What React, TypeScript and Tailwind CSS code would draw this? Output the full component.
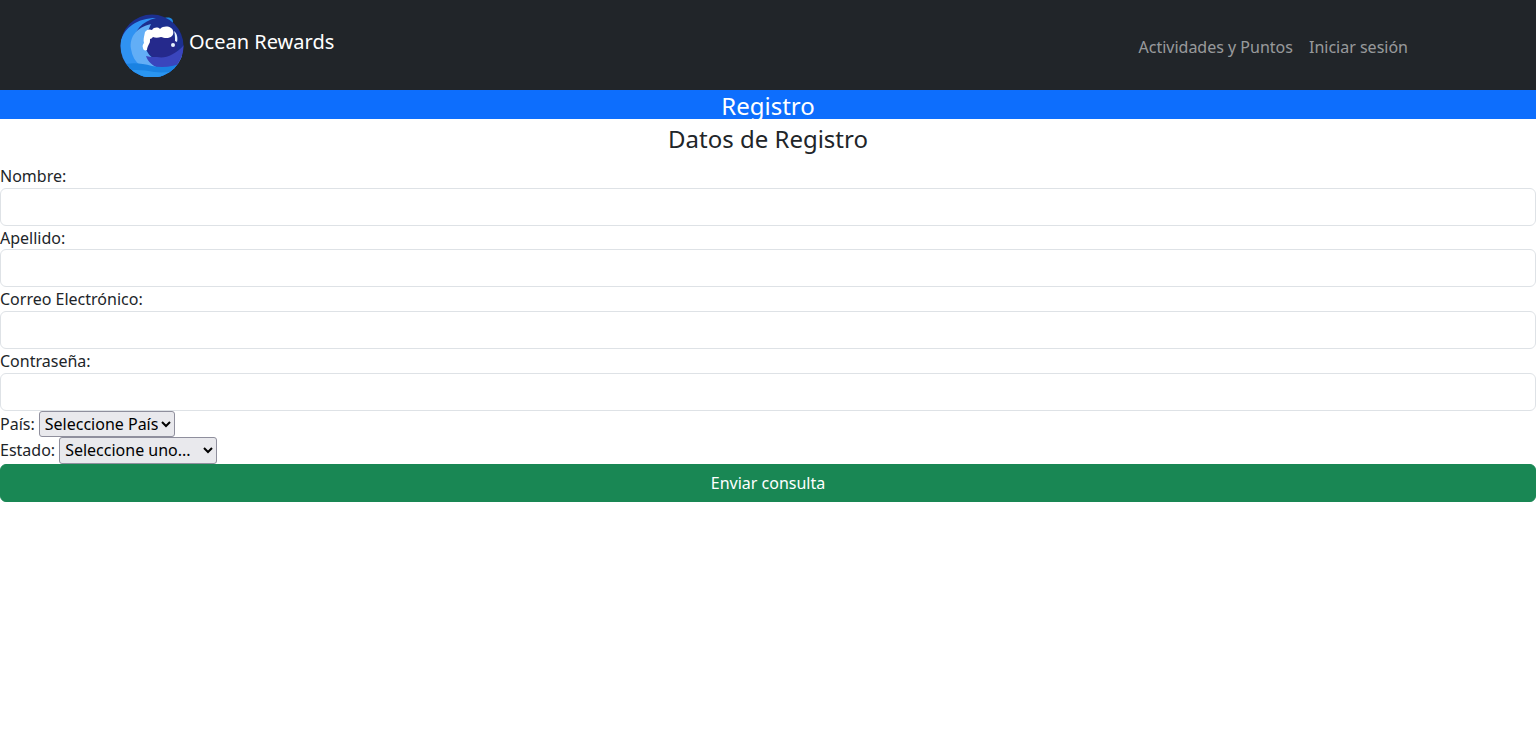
import React from "react";

const font = { fontFamily: "" };

function Logo() {
  return (
    <svg viewBox="0 0 64 64" className="w-16 h-16 shrink-0">
      <defs>
        <clipPath id="disc">
          <circle cx="32" cy="33" r="31.5" />
        </clipPath>
      </defs>
      <path d="M41 9c1-4 7-6 11-3 1 1 1 3 1 4-4-2-8-2-12-1z" fill="#1e88e5" />
      <g clipPath="url(#disc)">
        <rect width="64" height="64" fill="#1c2f8f" />
        <path d="M0 30C4 14 18 5 36 5 20 9 12 20 14 34c2 14 14 22 28 21l22-6v16H0z" fill="#2f92f2" />
        <path d="M11 36c-2-12 6-22 20-25l-6 14c-2 10 4 22 18 24 8 1 16-3 21-9v8L40 60C24 58 13 50 11 36z" fill="#62aef6" />
        <path d="M27 28c0-4 6-6 14-5l12 1c4 3 5 10 3 16-4 4-10 8-17 7-8-2-13-10-12-19z" fill="#25298c" />
        <path d="M37 44c8 2 18-2 27-12v16c-7 6-16 9-25 7-6-2-11-6-13-12 3 1 7 1 11 1z" fill="#3a45bd" />
        <path d="M0 53c10-4 20-3 32 0 10 2 22 1 32-4v15H0z" fill="#1a82e2" />
        <path d="M0 59c12-3 24-2 34 0 10 1 20 0 30-3v8H0z" fill="#2a95f0" />
      </g>
      <path
        d="M25 19c2-3 5-3 7-2 2-3 6-3 8-1 3-3 8-3 11-1 3 2 3 6 1 8-3 3-8 2-11 1-3 1-6 1-8 0-1 1-2 2-3 2 0 2 0 4-1 5-1 2-2 4-2 6-2 1-4 0-4-2-1-2 0-4 1-5-1-3 0-6 1-11z"
        fill="#ffffff"
      />
      <path d="M54 18c3 2 4 7 3 11l-2-1c0-3 0-7-1-10z" fill="#e6f2ff" />
      <circle cx="53" cy="32" r="2" fill="#e6f2ff" />
    </svg>
  );
}

function Field({ label, id }: { label: string; id: string }) {
  return (
    <div>
      <label htmlFor={id} className="block h-[23.67px] leading-[24px]">
        {label}
      </label>
      <input
        id={id}
        type="text"
        className="block w-full h-[38px] bg-white border border-[#dee2e6] rounded-md px-3 py-1.5"
      />
    </div>
  );
}

export default function App() {
  return (
    <div className="min-h-screen bg-white text-[#212529] text-base font-['Noto_Sans',sans-serif]">
      <nav className="h-[90px] bg-[#212529] flex items-center justify-between pl-[120px] pr-[120px]">
        <a href="#" className="flex items-center gap-[5px] text-white text-xl pb-[1px]">
          <Logo />
          <span className="relative -top-[3px]">Ocean Rewards</span>
        </a>
        <ul className="flex gap-4 pr-2 pt-[4px] text-[#ffffff8c]">
          <li>
            <a href="#">Actividades y Puntos</a>
          </li>
          <li>
            <a href="#">Iniciar sesión</a>
          </li>
        </ul>
      </nav>

      <div className="h-[29px] bg-[#0d6efd] text-white text-2xl leading-[32px] text-center">Registro</div>

      <main>
        <h2 className="h-[45px] text-2xl leading-[40px] text-center font-normal">Datos de Registro</h2>

        <form>
          <Field label="Nombre:" id="nombre" />
          <Field label="Apellido:" id="apellido" />
          <Field label="Correo Electrónico:" id="correo" />
          <Field label="Contraseña:" id="contrasena" />

          <div className="flex items-center h-[26px]">
            <label htmlFor="pais" className="mr-1">
              País:
            </label>
            <select
              id="pais"
              className="h-[26px] w-[136px] text-black border border-[#8f8f9d] bg-[#e9e9ed] rounded-[3px] pl-[1px]"
              style={{ appearance: "auto" }}
            >
              <option>Seleccione País</option>
            </select>
          </div>
          <div className="flex items-center h-[27px]">
            <label htmlFor="estado" className="mr-1">
              Estado:
            </label>
            <select
              id="estado"
              className="h-[27px] w-[158px] text-black border border-[#8f8f9d] bg-[#e9e9ed] rounded-[3px] pl-[1px]"
              style={{ appearance: "auto" }}
            >
              <option>Seleccione uno...</option>
            </select>
          </div>

          <button
            type="submit"
            className="block w-full h-[38px] bg-[#198754] border border-[#198754] rounded-md text-white text-center"
          >
            Enviar consulta
          </button>
        </form>
      </main>
    </div>
  );
}
